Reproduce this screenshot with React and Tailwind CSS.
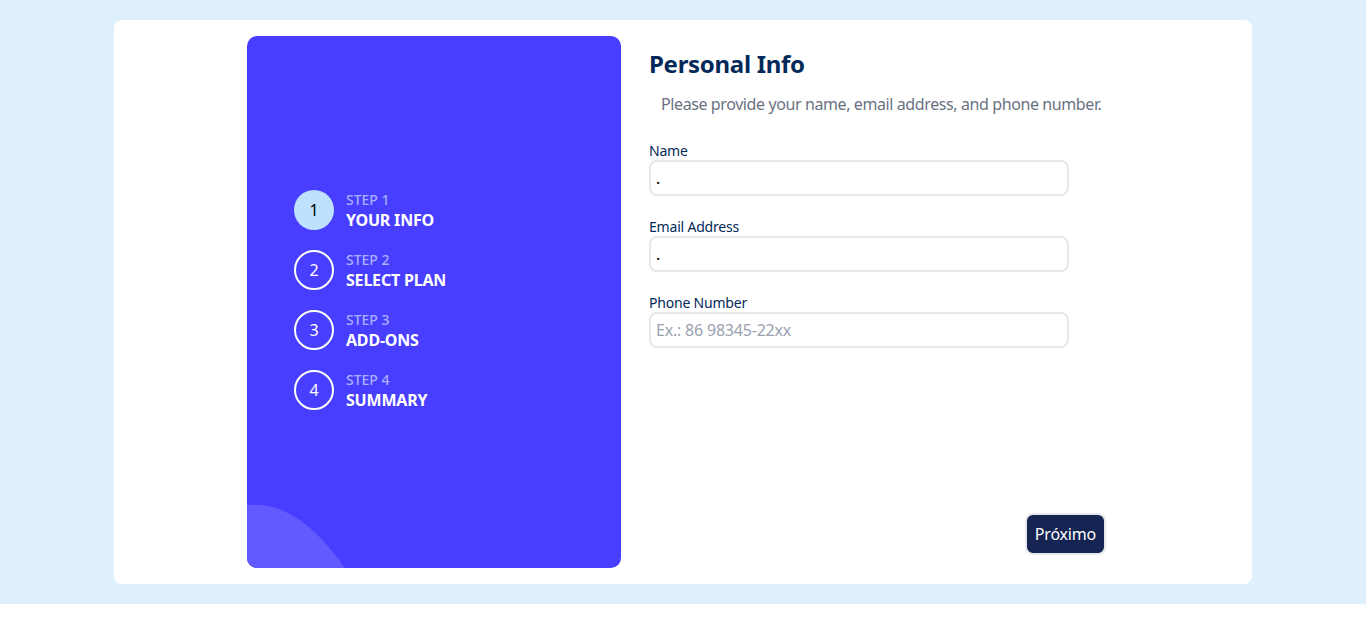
import React from 'react';

const steps = [
  { n: 1, title: 'YOUR INFO', active: true },
  { n: 2, title: 'SELECT PLAN' },
  { n: 3, title: 'ADD-ONS' },
  { n: 4, title: 'SUMMARY' },
];

const fields = [
  { label: 'Name', value: '.' },
  { label: 'Email Address', value: '.' },
  { label: 'Phone Number', placeholder: 'Ex.: 86 98345-22xx' },
];

const App = () => {
  return (
    <div className="bg-[#dff0fd] px-[114px] py-5 font-['Noto_Sans',sans-serif]">
      <div className="flex h-[564px] rounded-lg bg-white p-4 pl-[133px]">
        {/* Sidebar */}
        <aside className="relative flex h-[532px] w-[374px] flex-col justify-center gap-5 overflow-hidden rounded-[10px] bg-[#483eff] pb-1 pl-[47px]">
          {steps.map(step => (
            <div key={step.n} className="flex h-10 items-center gap-3">
              <div
                className={
                  step.active
                    ? 'flex h-10 w-10 items-center justify-center rounded-full bg-[#bee2fd] text-base text-black'
                    : 'flex h-10 w-10 items-center justify-center rounded-full border-2 border-white text-base text-white'
                }
              >
                {step.n}
              </div>
              <div className="flex flex-col">
                <span className="text-sm leading-5 font-medium text-[#abb0ff]">STEP {step.n}</span>
                <span className="text-base leading-5 font-bold tracking-[-0.2px] text-white">{step.title}</span>
              </div>
            </div>
          ))}
          <svg className="absolute bottom-0 left-0" width="100" height="64" viewBox="0 0 100 64">
            <path d="M0 1 C32 -2 62 14 98 64 L0 64 Z" fill="#6259ff" />
          </svg>
        </aside>

        {/* Form */}
        <section className="ml-7 flex w-[457px] flex-col">
          <h1 className="mt-3 text-2xl leading-8 font-bold tracking-[-0.3px] text-[#022959]">Personal Info</h1>
          <p className="mt-3 pl-3 text-base leading-6 tracking-[-0.4px] whitespace-nowrap text-gray-500">
            Please provide your name, email address, and phone number.
          </p>
          <div className="mt-[27px] flex w-[420px] flex-col gap-[23px]">
            {fields.map(f => (
              <label key={f.label} className="flex flex-col">
                <span className="text-sm leading-4 tracking-[-0.2px] text-[#022959]">{f.label}</span>
                <input
                  className="mt-px h-9 rounded-lg border-2 border-gray-200 pl-[5px] text-base tracking-[-0.2px] text-black outline-none placeholder:text-gray-400"
                  defaultValue={f.value}
                  placeholder={f.placeholder}
                />
              </label>
            ))}
          </div>
          <button className="mt-auto mb-[13px] h-[42px] self-end rounded-lg border-2 border-gray-200 bg-[#162453] px-2 text-base tracking-[-0.2px] text-white">
            Próximo
          </button>
        </section>
      </div>
    </div>
  );
};

export default App;
